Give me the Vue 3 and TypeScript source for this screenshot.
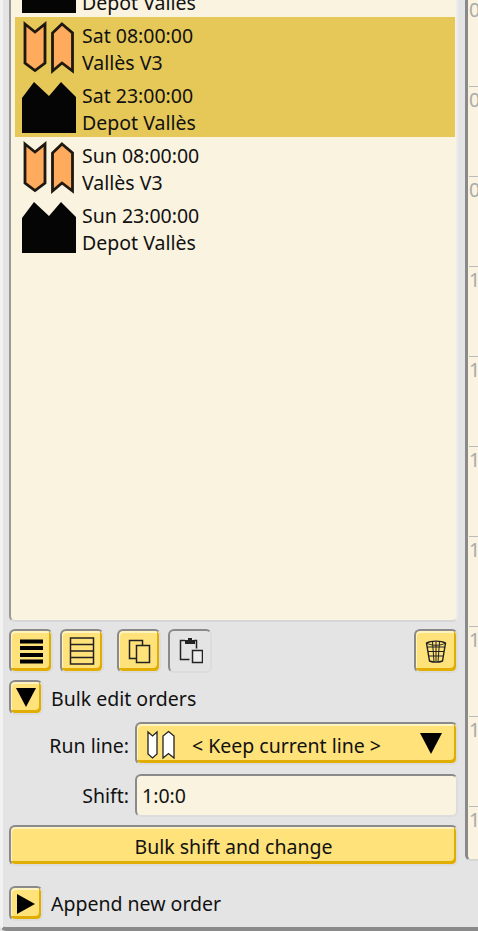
<template>
  <div class="window">
    <div class="left">
      <div class="list">
        <div class="list-scroll">
          <div
            v-for="(order, index) in orders"
            :key="index"
            class="order"
            :class="{ selected: order.selected }"
          >
            <svg v-if="order.kind === 'line'" class="order-icon" viewBox="0 0 54 54">
              <path d="M3 4 L13 12 L23 4 L23 43 L13 50.500 L3 43 Z" fill="#ffab5e" stroke="#1e1810" stroke-width="2.800" />
              <path d="M40 4 L50.500 13 L50.500 51 L40 43 L30.500 51 L30.500 13 Z" fill="#ffab5e" stroke="#1e1810" stroke-width="2.800" />
            </svg>
            <svg v-else class="order-icon" viewBox="0 0 54 54">
              <path d="M0 18 L12 2 L27 16 L39 2 L54 17 L54 53 L0 53 Z" fill="#050505" />
            </svg>
            <div class="order-text">
              <div>{{ order.time }}</div>
              <div>{{ order.name }}</div>
            </div>
          </div>
        </div>
      </div>

      <div class="toolbar">
        <button class="btn square" type="button">
          <svg viewBox="0 0 26 26" width="26" height="26">
            <path d="M2 1.500h23v4H2zM2 8h23v4H2zM2 15h23v4H2zM2 21.500h23v4H2z" fill="#000" />
          </svg>
        </button>
        <button class="btn square" type="button">
          <svg viewBox="0 0 26 28" width="26" height="28">
            <path d="M1.500 1h23v26h-23zM1.500 7.500h23M1.500 14h23M1.500 20.500h23" fill="none" stroke="#222" stroke-width="1.500" />
          </svg>
        </button>
        <button class="btn square gap-left" type="button">
          <svg viewBox="0 0 26 28" width="26" height="28">
            <path d="M3.500 3.500h13v18h-13z" fill="none" stroke="#222" stroke-width="1.500" />
            <path d="M10.500 8.500h13v17h-13z" fill="#ffe27a" stroke="#222" stroke-width="1.500" />
          </svg>
        </button>
        <button class="btn square plain" type="button">
          <svg viewBox="0 0 26 28" width="26" height="28">
            <path d="M8 3.500H3.500v19h9M17 3.500h2.500v8" fill="none" stroke="#222" stroke-width="1.500" />
            <path d="M8 3h10v4H8zM11 1h4v2h-4z" fill="#222" />
            <path d="M15.500 13.500h10v12h-10z" fill="#ececec" stroke="#222" stroke-width="1.500" />
          </svg>
        </button>
        <button class="btn square trash" type="button">
          <svg viewBox="0 0 22 24" width="22" height="24">
            <path d="M1.500 4 C6 1.500 16 1.500 20.500 4 L17.500 22 C14 23.500 8 23.500 4.500 22 Z" fill="none" stroke="#222" stroke-width="1.400" />
            <path d="M2 8h18M3 12.500h16M3.500 17h15M7.500 3l1.500 20M14.500 3l-1.500 20M11 3v20M1.500 4 C6 7 16 7 20.500 4" fill="none" stroke="#222" stroke-width="1" />
          </svg>
        </button>
      </div>

      <div class="section-head">
        <button class="btn small" type="button"><span class="tri-down"></span></button>
        <span class="head-label">Bulk edit orders</span>
      </div>

      <div class="field first">
        <label>Run line:</label>
        <button class="btn dropdown" type="button">
          <svg viewBox="0 0 30 30" width="30" height="30">
            <path d="M2 3 L6.500 7 L11 3 L11 25 L6.500 29 L2 25 Z" fill="#fff" stroke="#222" stroke-width="1.300" />
            <path d="M22.500 2.500 L28 7 L28 29 L22.500 24.500 L17 29 L17 7 Z" fill="#fff" stroke="#222" stroke-width="1.300" />
          </svg>
          <span class="dropdown-label">&lt; Keep current line &gt;</span>
          <span class="tri-down big"></span>
        </button>
      </div>
      <div class="field">
        <label>Shift:</label>
        <div class="input">1:0:0</div>
      </div>

      <button class="btn wide" type="button">Bulk shift and change</button>

      <div class="section-head append">
        <button class="btn small" type="button"><span class="tri-right"></span></button>
        <span>Append new order</span>
      </div>
    </div>

    <div class="right">
      <div v-for="(tick, index) in ticks" :key="index" class="tick">{{ tick }}</div>
    </div>
  </div>
</template>

<script setup lang="ts">
interface Order {
  kind: 'line' | 'depot';
  time: string;
  name: string;
  selected?: boolean;
}

// first row is scrolled mostly out of view, only its name peeks in
const orders: Order[] = [
  { kind: 'depot', time: '', name: 'Depot Vallès' },
  { kind: 'line', time: 'Sat 08:00:00', name: 'Vallès V3', selected: true },
  { kind: 'depot', time: 'Sat 23:00:00', name: 'Depot Vallès', selected: true },
  { kind: 'line', time: 'Sun 08:00:00', name: 'Vallès V3' },
  { kind: 'depot', time: 'Sun 23:00:00', name: 'Depot Vallès' }
];

const ticks = ['0', '0', '0', '1', '1', '1', '1', '1', '1', '1'];
</script>

<style>
html,
body {
  margin: 0;
  background: #e4e4e4;
}
</style>

<style scoped>
.window {
  width: 478px;
  height: 931px;
  box-sizing: border-box;
  overflow: hidden;
  display: flex;
  background: #e4e4e4;
  border-bottom: 4px solid #8a8a8a;
  border-left: 3px solid #f2f2f2;
  border-bottom-left-radius: 6px;
  font-family: 'Noto Sans', sans-serif;
  font-size: 19.5px;
  color: #111;
}

.left {
  width: 455px;
  flex: none;
  box-sizing: border-box;
  padding-left: 6px;
}

.list {
  height: 622px;
  box-sizing: border-box;
  overflow: hidden;
  background: #f9f3df;
  border: 2px solid #999;
  border-top: 0;
  border-right: 2px solid #ececec;
  border-bottom: 2px solid #d6d6d6;
  border-radius: 0 0 6px 6px;
  padding: 0 1px 0 4px;
}

.list-scroll {
  margin-top: -43px;
}

.order {
  display: flex;
  height: 60px;
  align-items: center;
  padding-left: 7px;
}

.order.selected {
  background: #e5c858;
}

.order-icon {
  width: 54px;
  height: 54px;
  flex: none;
}

.order-text {
  margin-left: 6px;
  padding-top: 3px;
  line-height: 27px;
  white-space: nowrap;
}

.order-text div {
  min-height: 27px;
}

.toolbar {
  display: flex;
  margin-top: 7px;
  gap: 7px;
}

.btn {
  box-sizing: border-box;
  font: inherit;
  color: inherit;
  padding: 0;
  display: flex;
  align-items: center;
  justify-content: center;
  background: #ffe27a;
  border: 2px solid #8a8a8a;
  border-right-color: #dcdcdc;
  border-bottom-color: #dcdcdc;
  border-radius: 6px;
  box-shadow: inset -2px -3px 0 #e0ad00, inset 1px 2px 0 #fff3c0;
}

.square {
  width: 44px;
  height: 44px;
}

.gap-left {
  margin-left: 6px;
}

.plain {
  background: #e4e4e4;
  box-shadow: none;
}

.trash {
  margin-left: auto;
}

.section-head {
  display: flex;
  align-items: center;
  gap: 8px;
  margin-top: 7px;
  height: 35px;
}

.head-label {
  padding-top: 2px;
}

.small {
  width: 34px;
  height: 35px;
}

.tri-down {
  width: 0;
  height: 0;
  border-left: 10px solid transparent;
  border-right: 10px solid transparent;
  border-top: 19px solid #000;
}

.tri-right {
  width: 0;
  height: 0;
  border-top: 10px solid transparent;
  border-bottom: 10px solid transparent;
  border-left: 18px solid #000;
}

.field {
  display: flex;
  align-items: center;
  margin-top: 9px;
  gap: 6px;
}

.field.first {
  margin-top: 7px;
}

.field.first label,
.dropdown-label {
  padding-top: 4px;
}

.field label {
  width: 120px;
  text-align: right;
  flex: none;
}

.dropdown {
  flex: 1;
  height: 43px;
  justify-content: flex-start;
  padding-left: 9px;
}

.dropdown-label {
  flex: 1;
  text-align: left;
  margin-left: 16px;
}

.tri-down.big {
  margin-right: 14px;
  border-left-width: 11px;
  border-right-width: 11px;
  border-top-width: 21px;
}

.input {
  flex: 1;
  height: 43px;
  box-sizing: border-box;
  background: #f9f3df;
  border: 2px solid #8a8a8a;
  border-right-color: #dcdcdc;
  border-bottom-color: #dcdcdc;
  border-radius: 6px;
  padding-left: 5px;
  line-height: 40px;
}

.wide {
  width: 100%;
  height: 41px;
  margin-top: 8px;
  padding-top: 2px;
}

.append {
  margin-top: 20px;
}

.right {
  width: 13px;
  flex: none;
  height: 861px;
  margin-left: 7px;
  box-sizing: border-box;
  overflow: hidden;
  background: #f9f3df;
  border-left: 3px solid #8a8a8a;
  border-bottom: 2px solid #d6d6d6;
  border-radius: 0 0 0 6px;
  padding-left: 1px;
  color: #aaa;
}

.tick {
  width: 20px;
  height: 89px;
  border-top: 1px solid #bbb;
  line-height: 26px;
}

.tick:first-child {
  margin-top: -4px;
}
</style>
